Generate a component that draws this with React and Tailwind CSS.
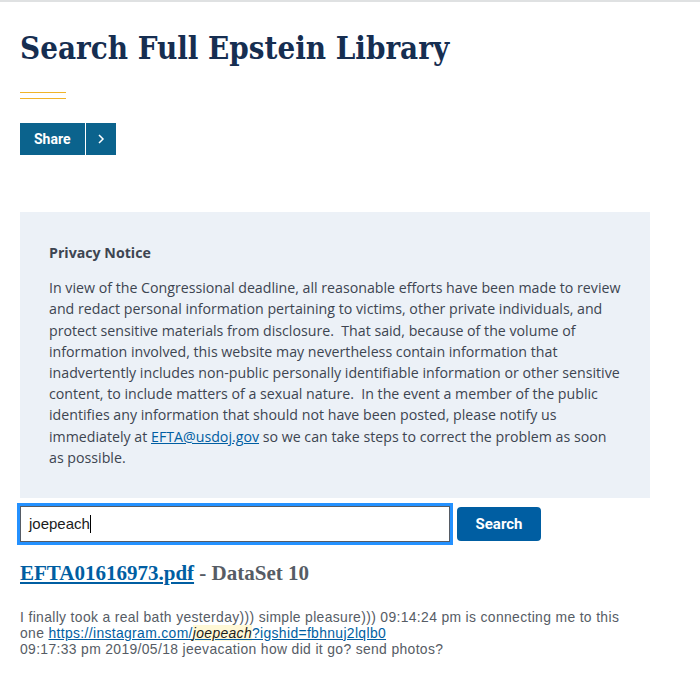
import React from "react";

export default function App() {
  const sans = { fontFamily: '"Open Sans", "Noto Sans", sans-serif' };
  return (
    <div className="min-h-[686px] w-[700px] bg-white border-t-2 border-[#dfe1e2]">
      <div className="px-5">
        <h1
          className="pt-[26px] text-[31px] leading-[40px] font-bold text-[#162e51]"
          style={{ fontFamily: '"DejaVu Serif Condensed", "DejaVu Serif", serif', fontStretch: "condensed" }}
        >
          Search Full Epstein Library
        </h1>
        <div className="mt-[24px] w-[46px] h-[7px] border-y border-[#f0b429]" />
        <div className="mt-[24px] flex">
          <div
            className="flex h-8 bg-[#0b638d] text-white text-[14px] font-bold items-center"
            style={{ fontFamily: 'Roboto, sans-serif' }}
          >
            <span className="px-[14px]">Share</span>
            <span className="w-px h-full bg-white" />
            <span className="px-[10px] flex items-center">
              <svg width="10" height="12" viewBox="0 0 10 12" fill="none" stroke="white" strokeWidth="1.5">
                <path d="M3 2l4 4-4 4" />
              </svg>
            </span>
          </div>
        </div>
        <div className="mt-[57px] w-[630px] bg-[#ecf1f7] pl-[29px] pr-4 pt-[30px] pb-[30px] text-[#3d4551] text-[14.2px] leading-[21.2px]" style={sans}>
          <p className="font-bold mb-[14px]">Privacy Notice</p>
          <p>
            In view of the Congressional deadline, all reasonable efforts have been made to review<br />
            and redact personal information pertaining to victims, other private individuals, and<br />
            protect sensitive materials from disclosure.&nbsp; That said, because of the volume of<br />
            information involved, this website may nevertheless contain information that<br />
            inadvertently includes non-public personally identifiable information or other sensitive<br />
            content, to include matters of a sexual nature.&nbsp; In the event a member of the public<br />
            identifies any information that should not have been posted, please notify us<br />
            immediately at <a className="text-[#005ea2] underline">EFTA@usdoj.gov</a> so we can take steps to correct the problem as soon<br />
            as possible.
          </p>
        </div>
        <div className="mt-[8px] flex items-center gap-[7px]">
          <div className="w-[430px] h-[36px] border border-[#565c65] outline-[3px] outline-solid outline-[#2491ff] flex items-center px-2 text-[15px] text-[#1b1b1b]" style={{ fontFamily: '"Liberation Sans", sans-serif' }}>
            joepeach<span className="w-px h-[18px] bg-black" />
          </div>
          <button
            className="w-[84px] h-[34px] bg-[#005ea2] rounded-[4px] text-white text-[15px] font-bold"
            style={{ fontFamily: 'Roboto, sans-serif' }}
          >
            Search
          </button>
        </div>
        <div className="mt-[16px] text-[21px] font-bold" style={{ fontFamily: '"Liberation Serif", serif' }}>
          <a className="text-[#005ea2] underline">EFTA01616973.pdf</a>
          <span className="text-[#565c65]"> - DataSet 10</span>
        </div>
        <div className="mt-[19px] text-[13.9px] tracking-[0.35px] leading-[16px] text-[#565c65]" style={{ fontFamily: '"Liberation Sans", sans-serif' }}>
          I finally took a real bath yesterday))) simple pleasure))) 09:14:24 pm is connecting me to this<br />
          one{" "}
          <a className="text-[#005ea2] underline">
            https://instagram.com/<em className="bg-[#fff8d6] text-[#1b1b1b]">joepeach</em>?igshid=fbhnuj2lqlb0
          </a>
          <br />
          09:17:33 pm 2019/05/18 jeevacation how did it go? send photos?
        </div>
      </div>
    </div>
  );
}
